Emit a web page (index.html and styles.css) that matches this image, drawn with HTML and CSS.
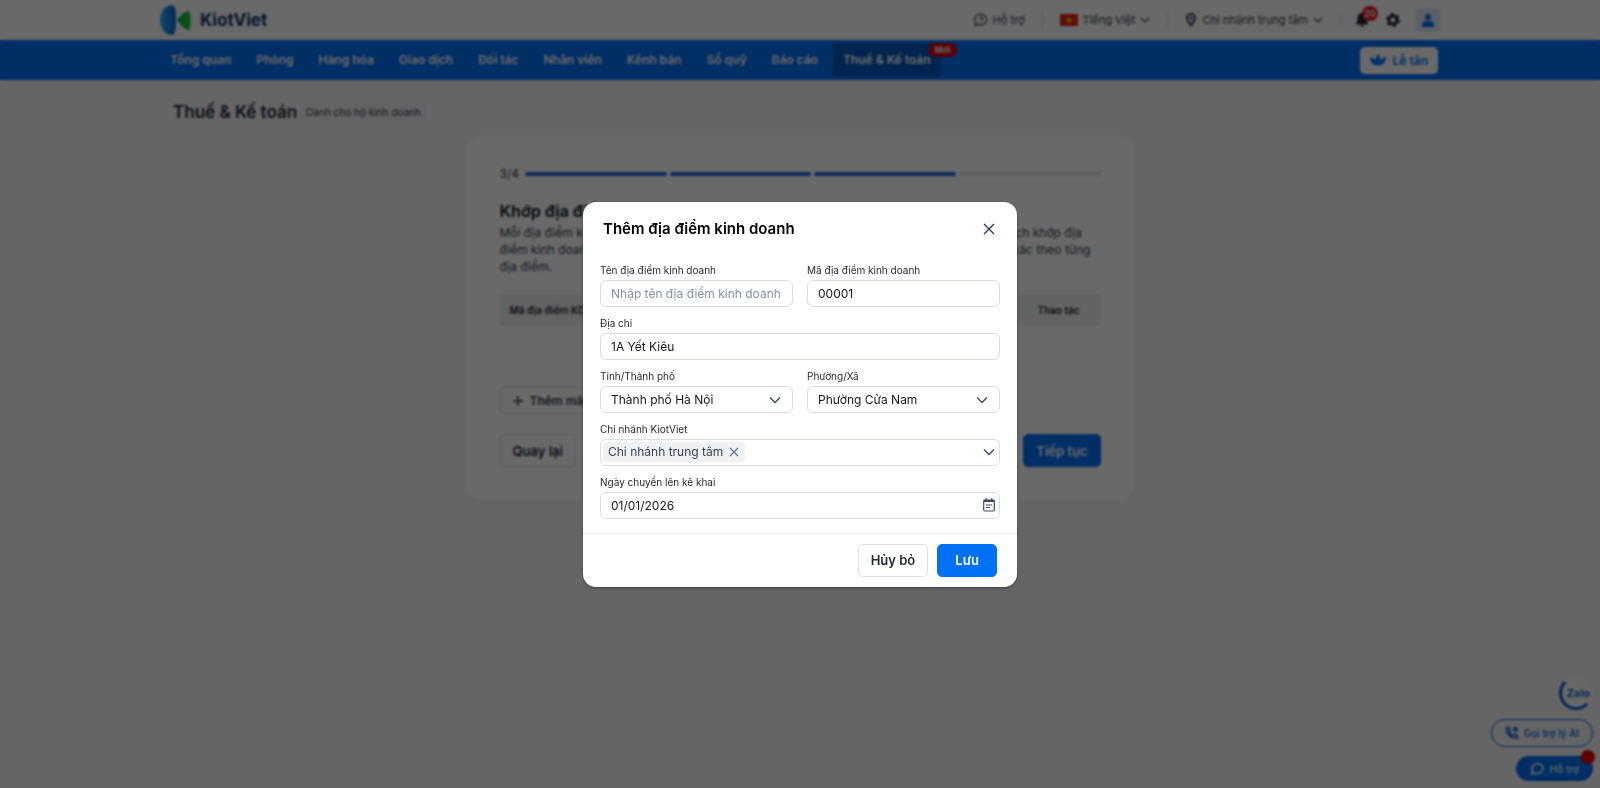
FILE: index.html
```html
<!DOCTYPE html>
<html lang="vi">
<head>
<meta charset="utf-8">
<meta name="viewport" content="width=device-width, initial-scale=1">
<title>Thuế &amp; Kế toán - KiotViet</title>
<link rel="stylesheet" href="styles.css">
</head>
<body>
<header class="topbar">
  <div class="container topbar-inner">
    <a class="logo" href="#">
      <svg width="32" height="32" viewBox="0 0 32 32" aria-hidden="true">
        <defs>
          <linearGradient id="lb" x1="0" x2="1"><stop offset="0" stop-color="#2bb5f0"/><stop offset="1" stop-color="#0b62e0"/></linearGradient>
          <linearGradient id="lg" x1="0" x2="1"><stop offset="0" stop-color="#00b53c"/><stop offset="1" stop-color="#22c63c"/></linearGradient>
        </defs>
        <path d="M11 1C4 2 0 9 0 16s4 14 11 15c3 0 4-2 4.500-5 .7-7 .7-13 0-20C15 3 14 1 11 1z" fill="url(#lb)"/>
        <path d="M18 14.500C21 11 24 8 28 7c1.500 0 2 1 2.300 3 .6 4 .6 9 0 13-.3 2-.8 3-2.300 3-4-1-7-5-10-8.500-1-1-1-2 0-3z" fill="url(#lg)"/>
      </svg>
      <span>KiotViet</span>
    </a>
    <div class="tools">
      <a class="tool" href="#">
        <svg width="14" height="14" viewBox="0 0 14 14" fill="none" stroke="currentColor" stroke-width="1.200"><path d="M7 1.200a5.700 5.400 0 1 1-2.700 10.200L1.300 12.500l.4-3A5.400 5.400 0 0 1 7 1.200z"/><path d="M5.700 5.300c.2-1.600 2.900-1.400 2.700.2C8.300 6.400 7 6.500 7 7.600M7 8.800v.8"/></svg>
        Hỗ trợ</a>
      <span class="divider"></span>
      <button class="tool" type="button">
        <svg width="18" height="12" viewBox="0 0 18 12"><path fill="#e0251b" d="M0 0h18v12H0z"/><path fill="#ffd400" d="M9 2.300l.9 2.700h2.800l-2.300 1.700.9 2.700L9 7.700 6.700 9.400l.9-2.700L5.300 5h2.800z"/></svg>
        Tiếng Việt
        <svg width="10" height="10" viewBox="0 0 10 10" fill="none" stroke="currentColor" stroke-width="1.200"><path d="M1 3l4 4 4-4"/></svg>
      </button>
      <span class="divider"></span>
      <button class="tool" type="button">
        <svg width="12" height="14" viewBox="0 0 12 14" fill="none" stroke="currentColor" stroke-width="2"><path d="M6 12.500C4.500 10 2 7.500 2 5a4 4 0 0 1 8 0c0 2.500-2.500 5-4 7.500z"/><circle cx="6" cy="5" r=".6"/></svg>
        Chi nhánh trung tâm
        <svg width="10" height="10" viewBox="0 0 10 10" fill="none" stroke="currentColor" stroke-width="1.200"><path d="M1 3l4 4 4-4"/></svg>
      </button>
      <span class="divider"></span>
      <div class="icons">
        <button class="icon-btn" type="button" aria-label="Thông báo">
          <svg width="16" height="16" viewBox="0 0 16 16" fill="currentColor"><path d="M8 1c3 0 4.500 2 4.500 5v3l2 3.500h-13l2-3.500V6C3.500 3 5 1 8 1zM6 13.300h4c-.3 2.200-3.700 2.200-4 0z"/></svg>
          <span class="count">20</span>
        </button>
        <button class="icon-btn" type="button" aria-label="Thiết lập">
          <svg width="16" height="16" viewBox="0 0 16 16" fill="none" stroke="currentColor"><circle cx="8" cy="8" r="4" stroke-width="3"/><circle cx="8" cy="8" r="6" stroke-width="2" stroke-dasharray="3.140 3.140"/></svg>
        </button>
        <button class="avatar" type="button" aria-label="Tài khoản">
          <svg width="14" height="14" viewBox="0 0 14 14" fill="currentColor"><circle cx="7" cy="4" r="3"/><path d="M1 14v-2c0-2.500 2-4 4-4h4c2 0 4 1.500 4 4v2z"/></svg>
        </button>
      </div>
    </div>
  </div>
</header>
<nav class="nav">
  <div class="container nav-inner">
    <div class="nav-items">
      <a href="#">Tổng quan</a><a href="#">Phòng</a><a href="#">Hàng hóa</a><a href="#">Giao dịch</a><a href="#">Đối tác</a><a href="#">Nhân viên</a><a href="#">Kênh bán</a><a href="#">Sổ quỹ</a><a href="#">Báo cáo</a><a href="#" class="active">Thuế &amp; Kế toán<span class="new">Mới</span></a>
    </div>
    <button class="reception" type="button">
      <svg width="16" height="14" viewBox="0 0 16 14" fill="currentColor"><path d="M8 1c2 2 2.600 4 2 7 1.300-2 3-3.500 6-4-.3 5-3 8.500-8 8.500S.3 9 0 4c3 .5 4.700 2 6 4-.6-3 0-5 2-7z"/></svg>
      Lễ tân
    </button>
  </div>
</nav>
<main class="container page">
  <div class="page-head">
    <h1>Thuế &amp; Kế toán</h1>
    <span class="tag">Dành cho hộ kinh doanh</span>
  </div>
  <section class="card">
    <div class="steps"><span>3/4</span><i class="done"></i><i class="done"></i><i class="done"></i><i></i></div>
    <h2>Khớp địa điểm kinh doanh với chi nhánh KiotViet</h2>
    <p>Mỗi địa điểm kinh doanh có một mã riêng do cơ quan thuế cấp. Bạn cần hoàn tất đầy đủ cách khớp địa điểm kinh doanh với chi nhánh trên KiotViet để hệ thống ghi sổ và kê khai thuế được chính xác theo từng địa điểm.</p>
    <table>
      <thead><tr><th>Mã địa điểm KD</th><th>Tên địa điểm</th><th>Chi nhánh</th><th class="act">Thao tác</th></tr></thead>
    </table>
    <button class="add" type="button">
      <svg width="12" height="12" viewBox="0 0 12 12" stroke="currentColor" stroke-width="1.500"><path d="M6 1v10M1 6h10"/></svg>
      Thêm mã địa điểm
    </button>
    <div class="card-actions">
      <button class="btn" type="button">Quay lại</button>
      <button class="btn primary" type="button">Tiếp tục</button>
    </div>
  </section>
</main>
<aside class="floating">
  <a class="zalo" href="#">Zalo</a>
  <button class="pill" type="button">
    <svg width="14" height="14" viewBox="0 0 14 14" fill="none" stroke="currentColor" stroke-width="1.500"><path d="M1.500 1.500h2.800l1 3.200-1.600 1.200c.8 1.700 2 3 3.800 3.900l1.400-1.600 3.400 1.200v2.900C6.500 13 1 7.500 1.500 1.500z"/><path d="M10.500 1v5M8 3.500h5" stroke-width="2"/></svg>
    Gọi trợ lý AI
  </button>
  <button class="pill solid" type="button">
    <svg width="15" height="14" viewBox="0 0 15 14" fill="none" stroke="currentColor" stroke-width="1.500"><path d="M8 1.500a5.500 5 0 1 1-2.600 9.600l-3.700.9 1-3A5.500 5 0 0 1 8 1.500z"/></svg>
    Hỗ trợ
    <span class="dot"></span>
  </button>
</aside>

<div class="overlay">
  <form class="modal" role="dialog" aria-modal="true" aria-labelledby="modal-title">
    <header class="modal-head">
      <h2 id="modal-title">Thêm địa điểm kinh doanh</h2>
      <button class="close" type="button" aria-label="Đóng">
        <svg width="12" height="12" viewBox="0 0 12 12" fill="none" stroke="currentColor" stroke-width="1.400"><path d="M1 1l10 10M11 1L1 11"/></svg>
      </button>
    </header>
    <div class="fields">
      <div class="field">
        <label for="name">Tên địa điểm kinh doanh</label>
        <input class="control" id="name" type="text" placeholder="Nhập tên địa điểm kinh doanh">
      </div>
      <div class="field">
        <label for="code">Mã địa điểm kinh doanh</label>
        <input class="control" id="code" type="text" value="00001">
      </div>
      <div class="field wide">
        <label for="address">Địa chỉ</label>
        <input class="control" id="address" type="text" value="1A Yết Kiêu">
      </div>
      <div class="field">
        <label for="city">Tỉnh/Thành phố</label>
        <div class="with-icon">
          <select class="control" id="city"><option>Thành phố Hà Nội</option></select>
          <svg class="caret" width="12" height="12" viewBox="0 0 12 12"><path d="M1 3.500l5 5 5-5"/></svg>
        </div>
      </div>
      <div class="field">
        <label for="ward">Phường/Xã</label>
        <div class="with-icon">
          <select class="control" id="ward"><option>Phường Cửa Nam</option></select>
          <svg class="caret" width="12" height="12" viewBox="0 0 12 12"><path d="M1 3.500l5 5 5-5"/></svg>
        </div>
      </div>
      <div class="field wide">
        <label for="branch">Chi nhánh KiotViet</label>
        <div class="control multi">
          <span class="chip">Chi nhánh trung tâm
            <button type="button" aria-label="Bỏ chọn"><svg width="10" height="10" viewBox="0 0 10 10" fill="none" stroke="currentColor" stroke-width="1.400"><path d="M1 1l8 8M9 1L1 9"/></svg></button>
          </span>
          <input id="branch" type="text" role="combobox" aria-expanded="false">
          <svg class="chev" width="12" height="12" viewBox="0 0 12 12"><path d="M1 3.500l5 5 5-5"/></svg>
        </div>
      </div>
      <div class="field wide">
        <label for="date">Ngày chuyển lên kê khai</label>
        <div class="control multi date">
          <input id="date" type="text" value="01/01/2026">
          <button type="button" aria-label="Chọn ngày"><svg width="12" height="14" viewBox="0 0 12 14" fill="none" stroke="currentColor"><rect x=".7" y="2" width="10.600" height="11" rx="1.200" stroke-width="1.200"/><path d="M.7 3h10.600" stroke-width="2"/><path d="M3.200 0v3M8.800 0v3" stroke-width="1.200"/><path d="M3 7h6M3 9.500h4" stroke-width="1.200"/></svg></button>
        </div>
      </div>
    </div>
    <footer class="modal-foot">
      <button class="btn" type="button">Hủy bỏ</button>
      <button class="btn primary" type="submit">Lưu</button>
    </footer>
  </form>
</div>
</body>
</html>
```
FILE: styles.css
```css
* { box-sizing: border-box; }

body {
  margin: 0;
  min-height: 100vh;
  background: #f6f6f7;
  color: #1f2933;
  font-family: Inter, "Noto Sans", sans-serif;
  font-size: 13px;
}

h1, h2, p { margin: 0; }
a { color: inherit; text-decoration: none; }
button, input, select { font: inherit; color: inherit; }
button { border: 0; background: none; padding: 0; cursor: pointer; }
svg { display: block; flex: none; }

.container { max-width: 1280px; margin: 0 auto; }

/* Top bar */
.topbar { background: #fff; }
.topbar-inner { display: flex; align-items: center; justify-content: space-between; height: 40px; }
.logo { display: flex; align-items: center; gap: 8px; font-size: 17px; font-weight: 700; color: #15356b; }
.tools { display: flex; align-items: center; gap: 17px; font-size: 11px; color: #333d4a; }
.tool { display: flex; align-items: center; gap: 5px; }
.divider { width: 1px; height: 16px; background: #dfe2e6; }
.icons { display: flex; align-items: center; gap: 15px; margin-left: -4px; color: #1f2933; }
.icon-btn { position: relative; }
.count {
  position: absolute; top: -6px; left: 8px;
  min-width: 16px; height: 15px; border-radius: 8px;
  background: #e8121d; color: #fff; font-size: 9px; line-height: 15px; font-weight: 600;
}
.avatar {
  display: flex; align-items: center; justify-content: center;
  width: 24px; height: 24px; border-radius: 4px; background: #dfeafb; color: #0070f4;
}

/* Navigation */
.nav { background: #0070f4; color: #fff; }
.nav-inner { display: flex; align-items: center; justify-content: space-between; height: 40px; }
.nav-items { display: flex; gap: 5px; font-weight: 600; font-size: 12px; }
.nav-items a { position: relative; padding: 0 10px; line-height: 34px; border-radius: 4px; white-space: nowrap; }
.nav-items .active { background: #0058c0; }
.new {
  position: absolute; top: 0; right: -16px;
  padding: 0 6px; height: 14px; border-radius: 7px;
  background: #d8000c; font-size: 9px; line-height: 14px;
}
.reception {
  display: flex; align-items: center; gap: 7px;
  height: 27px; padding: 0 10px; margin-right: 2px; border-radius: 5px;
  background: #fff; color: #0070f4; font-size: 12px; font-weight: 600;
}

/* Page */
.page-head { display: flex; align-items: center; gap: 4px; padding: 20px 13px 11px; }
.page-head h1 { font-size: 17px; line-height: 24px; font-weight: 600; }
.tag { padding: 0 5px; border-radius: 4px; background: #eff0f2; color: #333d4a; font-size: 10px; line-height: 18px; }
.card { max-width: 667px; margin: 0 auto; padding: 32px 33px 33px; border-radius: 16px; background: #fff; }
.steps { display: flex; align-items: center; gap: 3px; font-size: 12px; line-height: 14px; color: #333d4a; }
.steps span { margin-right: 3px; }
.steps i { flex: 1; height: 4px; border-radius: 2px; background: #e2e4e8; }
.steps .done { background: #3067e0; }
.card h2 { margin-top: 18px; font-size: 16px; line-height: 24px; font-weight: 700; }
.card p { margin-top: 1px; font-size: 12px; line-height: 17px; color: #333d4a; }
.card table { width: 100%; margin-top: 19px; border-collapse: collapse; background: #eff0f2; font-size: 10px; }
.card th { height: 31px; padding: 0 10px; text-align: left; font-weight: 600; }
.card .act { width: 84px; text-align: center; }
.add {
  display: flex; align-items: center; gap: 6px;
  height: 27px; margin-top: 62px; padding: 0 11px;
  border: 1px solid #dcdfe4; border-radius: 5px; font-weight: 600; font-size: 12px; color: #333d4a;
}
.card-actions { display: flex; justify-content: space-between; margin-top: 20px; }
.btn {
  height: 33px; padding: 0 12px;
  border: 1px solid #dcdfe4; border-radius: 5px;
  background: #fff; color: #1f2933; font-size: 13px; font-weight: 600;
}
.btn.primary { border-color: #0070f4; background: #0070f4; color: #fff; }

/* Floating shortcuts */
.floating {
  position: fixed; right: 7px; bottom: 7px;
  display: flex; flex-direction: column; align-items: flex-end; gap: 9px;
}
.zalo {
  display: flex; align-items: center; justify-content: flex-end;
  width: 34px; height: 34px; border-radius: 50%;
  background: #fafafa; color: #0057d8;
  border: 3px solid transparent; border-left-color: #0057d8; border-bottom-color: #0057d8;
  font-size: 11px; font-weight: 600;
}
.pill {
  display: flex; align-items: center; gap: 5px;
  height: 28px; padding: 0 13px; border: 1px solid #0057d8; border-radius: 14px;
  color: #0057d8; font-size: 10px; font-weight: 500;
}
.pill.solid { position: relative; height: 25px; background: #0070f4; color: #fff; }
.dot { position: absolute; top: -7px; right: -3px; width: 14px; height: 14px; border-radius: 50%; background: #e00000; }

/* Modal */
.overlay {
  position: fixed; inset: 0;
  display: flex; align-items: center; justify-content: center;
  background: rgba(0, 0, 0, 0.59);
  -webkit-backdrop-filter: blur(1px);
  backdrop-filter: blur(1px);
}
.modal {
  width: 100%; max-width: 434px;
  border-radius: 13px; background: #fff; color: #15181c;
  box-shadow: 0 1px 3px rgba(0, 0, 0, 0.4);
}
.modal-head { display: flex; align-items: center; justify-content: space-between; padding: 16px 22px 19px 20px; }
.modal-head h2 { font-size: 15px; line-height: 22px; font-weight: 600; color: #000; }
.close { color: #2b3a4d; }
.fields { display: grid; grid-template-columns: 1fr 1fr; gap: 10px 14px; padding: 5px 17px 14px; }
.field { display: flex; flex-direction: column; gap: 3px; min-width: 0; }
.wide { grid-column: 1 / -1; }
.field label { font-size: 10px; line-height: 13px; color: #262a30; }
.control {
  width: 100%; height: 27px; padding: 0 10px;
  border: 1px solid #d9dce2; border-radius: 6px;
  background: #fff; font-size: 12px; outline: 0;
  appearance: none;
}
.control::placeholder { color: #8492a6; opacity: 1; }
.with-icon { position: relative; }
.caret { position: absolute; right: 12px; top: 8px; pointer-events: none; }
.caret, .chev { fill: none; stroke: #3d4b5f; stroke-width: 1.4; }
.multi { display: flex; align-items: center; padding: 0 4px 0 2px; }
.multi input { flex: 1; min-width: 0; border: 0; outline: 0; padding: 0; background: none; }
.date { padding-left: 10px; }
.date button { color: #3d4b5f; }
.chip {
  display: flex; align-items: center; gap: 6px;
  padding: 0 6px 0 5px; border-radius: 4px;
  background: #eff1f3; color: #34455c; line-height: 20px;
}
.chip button { color: #6a7b92; }
.modal-foot {
  display: flex; justify-content: flex-end; gap: 9px;
  padding: 10px 20px; border-top: 1px solid #eff0f2;
}
.modal-foot .primary { padding: 0 17px; }
```
